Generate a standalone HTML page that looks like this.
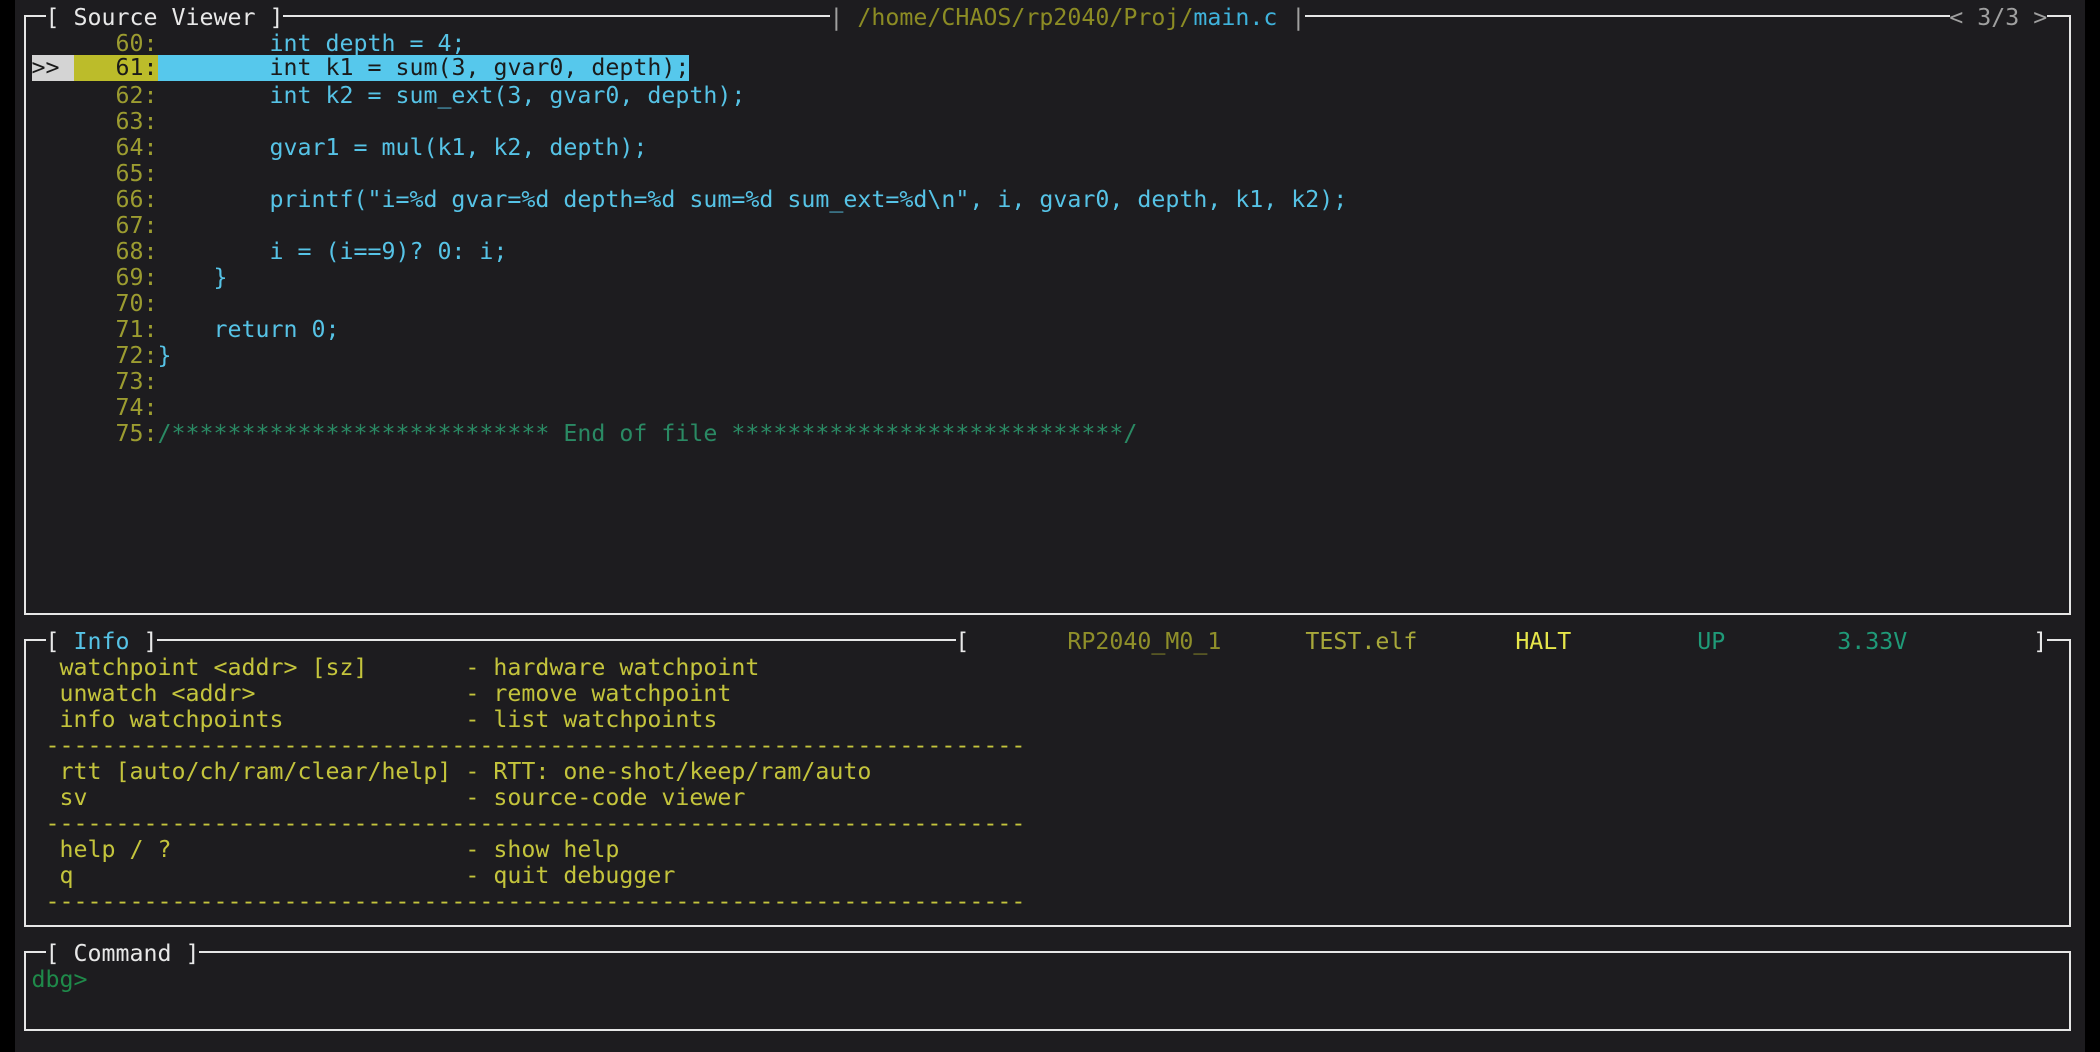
<!DOCTYPE html>
<html><head><meta charset="utf-8">
<style>
html,body{margin:0;padding:0;}
body{width:2100px;height:1052px;background:#000;position:relative;overflow:hidden;}
#term{position:absolute;left:15px;top:0;width:2070px;height:1052px;background:#1d1c1f;}
.r{position:absolute;left:17.5px;height:26px;line-height:26px;white-space:pre;font-family:"DejaVu Sans Mono","Liberation Mono",monospace;font-size:23.25px;color:#56c3e6;margin-top:2px;}
.h{position:absolute;height:2px;background:#e6e6e6;}
.v{position:absolute;width:2px;background:#e6e6e6;}
.ln{color:#9c9c30;}
.w{color:#e8e8e8;}
.g{color:#a0a0a0;}
.ol{color:#8c8c24;}
.cy{color:#3fb3dc;}
.cm{color:#2a8a64;}
.y{color:#c4c43c;}
.st1{color:#8f8f2a;}
.st2{color:#a8a83a;}
.st3{color:#e6e64a;}
.st4{color:#1f9a78;}
.dbg{color:#1f8a4a;}
.hl{display:inline-block;height:26px;vertical-align:top;}
</style></head><body>
<div id="term"></div>

<div class="h" style="left:24px;top:15px;width:22px"></div>
<div class="h" style="left:283px;top:15px;width:547px"></div>
<div class="h" style="left:1305px;top:15px;width:645px"></div>
<div class="h" style="left:2047px;top:15px;width:24px"></div>
<div class="v" style="left:24px;top:15px;height:600px"></div>
<div class="v" style="left:2069px;top:15px;height:600px"></div>
<div class="h" style="left:24px;top:613px;width:2047px"></div>
<div class="h" style="left:24px;top:639px;width:22px"></div>
<div class="h" style="left:157px;top:639px;width:799px"></div>
<div class="h" style="left:2047px;top:639px;width:24px"></div>
<div class="v" style="left:24px;top:639px;height:288px"></div>
<div class="v" style="left:2069px;top:639px;height:288px"></div>
<div class="h" style="left:24px;top:925px;width:2047px"></div>
<div class="h" style="left:24px;top:951px;width:22px"></div>
<div class="h" style="left:199px;top:951px;width:1872px"></div>
<div class="v" style="left:24px;top:951px;height:80px"></div>
<div class="v" style="left:2069px;top:951px;height:80px"></div>
<div class="h" style="left:24px;top:1029px;width:2047px"></div>

<div class="r" style="top:3px"><span class="w">  [ Source Viewer ]</span>                                       <span class="g">|</span> <span class="ol">/home/CHAOS/rp2040/Proj/</span><span class="cy">main.c</span> <span class="g">|</span>                                              <span class="g">&lt; 3/3 &gt;</span></div>
<div class="r" style="top:29px"><span class="ln">       60:</span>        int depth = 4;</div>
<div class="r" style="top:53px;margin-top:2px"> <span class="hl" style="background:#d4d4d4;color:#1a1a1a">&gt;&gt; </span><span class="hl" style="background:#bcbc2a;color:#1a1a1a">   61:</span><span class="hl" style="background:#56c8ec;color:#1a1a1a">        int k1 = sum(3, gvar0, depth);</span></div>
<div class="r" style="top:81px"><span class="ln">       62:</span>        int k2 = sum_ext(3, gvar0, depth);</div>
<div class="r" style="top:107px"><span class="ln">       63:</span></div>
<div class="r" style="top:133px"><span class="ln">       64:</span>        gvar1 = mul(k1, k2, depth);</div>
<div class="r" style="top:159px"><span class="ln">       65:</span></div>
<div class="r" style="top:185px"><span class="ln">       66:</span>        printf("i=%d gvar=%d depth=%d sum=%d sum_ext=%d\n", i, gvar0, depth, k1, k2);</div>
<div class="r" style="top:211px"><span class="ln">       67:</span></div>
<div class="r" style="top:237px"><span class="ln">       68:</span>        i = (i==9)? 0: i;</div>
<div class="r" style="top:263px"><span class="ln">       69:</span>    }</div>
<div class="r" style="top:289px"><span class="ln">       70:</span></div>
<div class="r" style="top:315px"><span class="ln">       71:</span>    return 0;</div>
<div class="r" style="top:341px"><span class="ln">       72:</span>}</div>
<div class="r" style="top:367px"><span class="ln">       73:</span></div>
<div class="r" style="top:393px"><span class="ln">       74:</span></div>
<div class="r" style="top:419px"><span class="ln">       75:</span><span class="cm">/*************************** End of file ****************************/</span></div>

<div class="r" style="top:627px"><span class="w">  [ </span>Info<span class="w"> ]</span>                                                         <span class="w">[</span>       <span class="st1">RP2040_M0_1</span>      <span class="st2">TEST.elf</span>       <span class="st3">HALT</span>         <span class="st4">UP</span>        <span class="st4">3.33V</span>         <span class="w">]</span></div>
<div class="r y" style="top:653px">   watchpoint &lt;addr&gt; [sz]       - hardware watchpoint</div>
<div class="r y" style="top:679px">   unwatch &lt;addr&gt;               - remove watchpoint</div>
<div class="r y" style="top:705px">   info watchpoints             - list watchpoints</div>
<div class="r y" style="top:731px">  ----------------------------------------------------------------------</div>
<div class="r y" style="top:757px">   rtt [auto/ch/ram/clear/help] - RTT: one-shot/keep/ram/auto</div>
<div class="r y" style="top:783px">   sv                           - source-code viewer</div>
<div class="r y" style="top:809px">  ----------------------------------------------------------------------</div>
<div class="r y" style="top:835px">   help / ?                     - show help</div>
<div class="r y" style="top:861px">   q                            - quit debugger</div>
<div class="r y" style="top:887px">  ----------------------------------------------------------------------</div>

<div class="r w" style="top:939px">  [ Command ]</div>
<div class="r dbg" style="top:965px"> dbg&gt;</div>
</body></html>
